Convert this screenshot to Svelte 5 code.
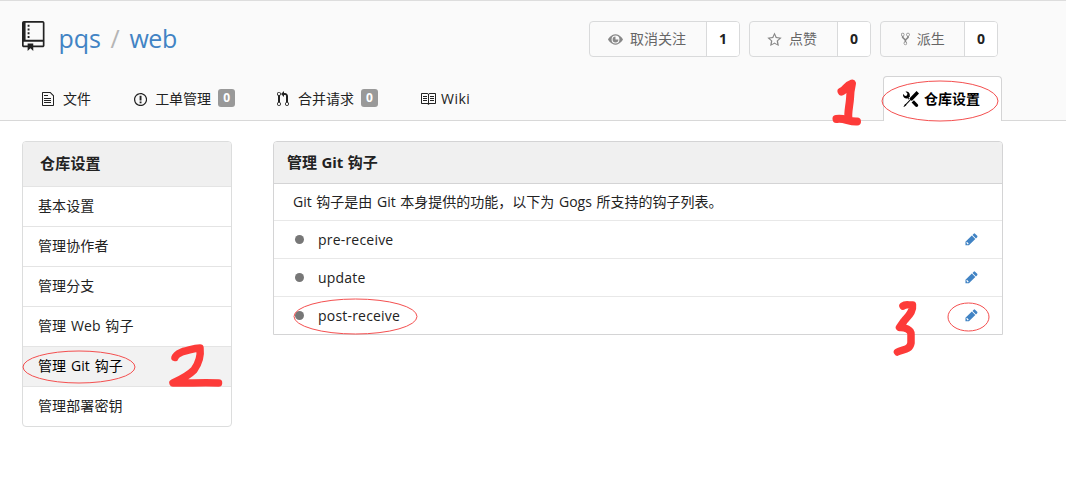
<script>
  const icons = {
    repo: [12, 'M4 9H3V8h1v1zm0-3H3v1h1V6zm0-2H3v1h1V4zm0-2H3v1h1V2zm8-1v12c0 .55-.45 1-1 1H6v2l-1.500-1.500L3 16v-2H1c-.55 0-1-.45-1-1V1c0-.55.45-1 1-1h10c.55 0 1 .45 1 1zm-.9 10H.9v2H3v-1h3v1h5.100v-2zm0-10.100H1.900V10h9.200V.9z'],
    file: [12, 'M6 5H2V4h4v1zM2 8h7V7H2v1zm0 2h7V9H2v1zm0 2h7v-1H2v1zm10-7.5V14c0 .55-.45 1-1 1H1c-.55 0-1-.45-1-1V2c0-.55.45-1 1-1h7.5L12 4.5zM11 5L8 2H1v12h10V5z'],
    issue: [14, 'M7 2.3c3.14 0 5.7 2.56 5.7 5.7s-2.56 5.7-5.7 5.7A5.71 5.71 0 0 1 1.3 8c0-3.14 2.56-5.7 5.7-5.7zM7 1C3.14 1 0 4.14 0 8s3.14 7 7 7 7-3.14 7-7-3.14-7-7-7zm1 3H6v5h2V4zm0 6H6v2h2v-2z'],
    pull: [12, 'M11 11.28V5c-.03-.78-.34-1.47-.94-2.06C9.46 2.35 8.78 2.03 8 2H7V0L4 3l3 3V4h1c.27.02.48.11.69.31.21.2.3.42.31.69v6.28A1.993 1.993 0 0 0 10 15a1.993 1.993 0 0 0 1-3.72zm-1 2.92c-.66 0-1.2-.55-1.2-1.2 0-.65.55-1.2 1.2-1.2.65 0 1.2.55 1.2 1.2 0 .65-.55 1.2-1.2 1.2zM4 3c0-1.11-.89-2-2-2a1.993 1.993 0 0 0-1 3.72v6.56A1.993 1.993 0 0 0 2 15a1.993 1.993 0 0 0 1-3.72V4.72c.59-.34 1-.98 1-1.72zm-.8 10c0 .66-.55 1.2-1.2 1.2-.65 0-1.2-.55-1.2-1.2 0-.65.55-1.2 1.2-1.2.65 0 1.2.55 1.2 1.2zM2 4.2C1.34 4.2.8 3.65.8 3c0-.65.55-1.2 1.2-1.2.65 0 1.2.55 1.2 1.2 0 .65-.55 1.2-1.2 1.2z'],
    book: [16, 'M3 5h4v1H3V5zm0 3h4V7H3v1zm0 2h4V9H3v1zm11-5h-4v1h4V5zm0 2h-4v1h4V7zm0 2h-4v1h4V9zm2-6v9c0 .55-.45 1-1 1H9.5l-1 1-1-1H2c-.55 0-1-.45-1-1V3c0-.55.45-1 1-1h5.5l1 1 1-1H15c.55 0 1 .45 1 1zm-8 .5L7.5 3H2v9h6V3.5zm7-.5H9.5l-.5.5V12h6V3z'],
    eye: [16, 'M8.06 2.500C3 2.500 0 8 0 8s3 5.500 8.060 5.500C13 13.500 16 8 16 8s-3-5.500-7.940-5.500zM8 12.200A4.200 4.200 0 1 1 8 3.800a4.200 4.200 0 0 1 0 8.400zM11.100 8A3.100 3.100 0 1 1 8 4.900L8 8z'],
    star: [16, 'M8 .5l2.250 4.800 5.450.7-3.950 3.700.95 5.300L8 12.600 3.300 15l.95-5.300L.3 6l5.450-.7L8 .5zm0 2.800L6.700 6.500l-3.700.5 2.700 2.400-.6 3.600L8 11.300l2.900 1.700-.6-3.600L13 7l-3.700-.5L8 3.300z'],
    fork: [10, 'M8 1a1.993 1.993 0 0 0-1 3.72V6L5 8 3 6V4.72A1.993 1.993 0 0 0 2 1a1.993 1.993 0 0 0-1 3.72V6.5l3 3v1.78A1.993 1.993 0 0 0 5 15a1.993 1.993 0 0 0 1-3.72V9.5l3-3V4.72A1.993 1.993 0 0 0 8 1zM2 4.2C1.34 4.2.8 3.65.8 3c0-.65.55-1.2 1.2-1.2.65 0 1.2.55 1.2 1.2 0 .65-.55 1.2-1.2 1.2zm3 10c-.66 0-1.2-.55-1.2-1.2 0-.65.55-1.2 1.2-1.2.65 0 1.2.55 1.2 1.2 0 .65-.55 1.2-1.2 1.2zm3-10c-.66 0-1.2-.55-1.2-1.2 0-.65.55-1.2 1.2-1.2.65 0 1.2.55 1.2 1.2 0 .65-.55 1.2-1.2 1.2z'],
    tools: [16, 'M4.48 7.27c.26.26 1.28 1.33 1.28 1.33l.56-.58-.88-.91 1.69-1.8s-.76-.74-.43-.45c.32-1.19.03-2.51-.87-3.44C4.93.5 3.66.2 2.52.51l1.93 2-.51 1.96-1.89.52-1.93-1.99C-.19 4.17.1 5.48 1 6.4c.94.98 2.29 1.26 3.48.87zm6.44 1.94l-2.33 2.3 3.84 3.98c.31.33.73.49 1.14.49.41 0 .82-.16 1.14-.49.63-.65.63-1.7 0-2.35l-3.79-3.93zM16 2.53L13.55 0 6.33 7.46l.88.91-4.31 4.46-.99.53-1.39 2.27.35.37 2.2-1.44.51-1.02L7.9 9.08l.88.91L16 2.53z'],
    pencil: [14, 'M.5 10.500v3.700h3.700l6.800-6.700-3.700-3.700-6.800 6.700zm2.800 2.600H2.200v-1H1.500v-1l.6-.6 1.900 1.900-.7.7zM13 5.500l-1.300 1.300L8 3.100l1.300-1.300a1 1 0 0 1 1.400 0L13 4.100c.4.4.4 1 0 1.400z'],
  };

  const actions = [
    { icon: 'eye', label: '取消关注', count: 1, kind: 'watch' },
    { icon: 'star', label: '点赞', count: 0, kind: 'star' },
    { icon: 'fork', label: '派生', count: 0, kind: 'fork' },
  ];
  const tabs = [
    { icon: 'file', label: '文件', kind: 'files' },
    { icon: 'issue', label: '工单管理', count: 0, kind: 'issues' },
    { icon: 'pull', label: '合并请求', count: 0, kind: 'pulls' },
    { icon: 'book', label: 'Wiki', kind: 'wiki' },
  ];
  const menu = ['基本设置', '管理协作者', '管理分支', '管理 Web 钩子', '管理 Git 钩子', '管理部署密钥'];
  const hooks = ['pre-receive', 'update', 'post-receive'];
</script>

{#snippet icon(name, size)}
  <svg class="icon" width={(icons[name][0] * size) / 16} height={size} viewBox="0 0 {icons[name][0]} 16"><path d={icons[name][1]} /></svg>
{/snippet}

<div class="page">
  <header>
    <div class="top">
      <div class="title">
        {@render icon('repo', 30)}
        <a class="owner" href="#owner">pqs</a><span class="slash">/</span><a class="name" href="#repo">web</a>
      </div>
      <div class="actions">
        {#each actions as a}
          <div class="action {a.kind}">
            <span class="label">{@render icon(a.icon, a.kind === 'fork' ? 14 : 15)}<span>{a.label}</span></span>
            <b>{a.count}</b>
          </div>
        {/each}
      </div>
    </div>
    <nav>
      {#each tabs as t}
        <div class="tab {t.kind}">
          {@render icon(t.icon, t.kind === 'issues' ? 15 : 16)}<span class="text">{t.label}</span>
          {#if t.count !== undefined}<span class="badge">{t.count}</span>{/if}
        </div>
      {/each}
      <div class="active-tab">{@render icon('tools', 16)}<span>仓库设置</span></div>
    </nav>
  </header>

  <main>
    <aside>
      <h4>仓库设置</h4>
      {#each menu as item, i}
        <div class="item" class:current={i === 4}>{item}</div>
      {/each}
    </aside>
    <section>
      <h4>管理 Git 钩子</h4>
      <p class="row intro">Git 钩子是由 Git 本身提供的功能，以下为 Gogs 所支持的钩子列表。</p>
      {#each hooks as hook}
        <div class="row hook">
          <i></i><span class="hook-name">{hook}</span>{@render icon('pencil', 15)}
        </div>
      {/each}
    </section>
  </main>

  <svg class="marks" width="1066" height="477" viewBox="0 0 1066 477" fill="none">
    <g stroke="#f44f4f" stroke-width="1">
      <ellipse cx="940" cy="101" rx="58" ry="20" />
      <ellipse cx="79" cy="367" rx="56" ry="16" />
      <ellipse cx="355.500" cy="316.500" rx="61.500" ry="17.500" />
      <ellipse cx="968.500" cy="317" rx="20.500" ry="14" />
    </g>
    <g stroke="#fd3b39" stroke-width="8" stroke-linecap="round" stroke-linejoin="round">
      <path d="M841.500 91.500C845 90 847 85 852 83.500C851 88 850 94 850 99C849.500 106 847.500 113 848.500 119M836.500 119C844 117.500 849 122 857 121.500" />
      <path stroke-width="7.500" d="M175 357.500C176 354 180 353 183 351.500C190 350 194 348 200 348C201 356 199 363 194 370C189 375 182 379 173 383C188 383.500 202 382 218.500 383" />
      <path stroke-width="7.500" d="M903 306C906 303.500 909 305.500 912.500 305C913.500 312 908 316 904 321L899.500 327.500C905 327 911 330 911 334L911 343C909.500 351 902 349 897.500 352" />
    </g>
  </svg>
</div>

<style>
  .page { position: relative; width: 1066px; height: 477px; overflow: hidden; background: #fff; color: #222; font: 14px/20px "Open Sans", "Noto Sans CJK SC", sans-serif; }
  .icon { display: block; flex: none; fill: currentColor; }
  header { box-sizing: border-box; height: 121px; background: #fafafa; border-top: 1px solid #ddd; box-shadow: inset 0 -1px #d8d8d8; display: flex; flex-direction: column; }
  .top { height: 75px; display: flex; justify-content: space-between; padding: 0 68px 0 22px; box-sizing: border-box; }
  .title { display: flex; align-items: flex-start; padding-top: 20px; font-size: 25px; line-height: 34px; }
  .title a { color: #4183c4; text-decoration: none; }
  .owner { width: 52px; margin-left: 14px; }
  .slash { width: 19px; color: #b5b5b5; }
  .name { letter-spacing: -.5px; }
  .actions { display: flex; gap: 9px; padding-top: 20px; }
  .action { display: flex; box-sizing: border-box; height: 36px; border: 1px solid #d9dadb; border-radius: 4px; background: #fafafa; overflow: hidden; }
  .watch { width: 151px; }
  .star { width: 122px; }
  .fork { width: 118px; }
  .label { flex: 1; display: flex; align-items: center; gap: 7px; padding-left: 18px; color: #666; }
  .label .icon { color: #888; }
  .star .label { padding-left: 17px; }
  .fork .label { padding-left: 20px; }
  .action b { width: 32px; border-left: 1px solid #d9dadb; background: #fff; text-align: center; line-height: 34px; }
  nav { flex: 1; display: flex; padding: 0 64px 0 42px; }
  .tab { display: flex; align-items: center; padding-top: 1px; }
  .text { margin-left: 9px; }
  .files { width: 92px; }
  .issues { width: 143px; }
  .issues .text { margin-left: 8px; }
  .pulls { width: 143px; }
  .pulls .text { margin-left: 9px; }
  .wiki .text { margin-left: 5px; letter-spacing: .5px; }
  .badge { width: 17px; height: 18px; margin: 0 0 2px 7px; border-radius: 3px; background: #999; color: #fff; font-size: 12px; line-height: 18px; font-weight: 700; text-align: center; }
  .active-tab { box-sizing: border-box; width: 119px; height: 45px; margin-left: auto; border: 1px solid #d4d4d5; border-bottom: 0; border-radius: 4px 4px 0 0; background: #fff; display: flex; align-items: center; gap: 5px; padding-left: 19px; color: #000; font-weight: 700; }
  main { display: flex; align-items: flex-start; gap: 41px; padding: 20px 63px 0 22px; }
  h4 { margin: 0; box-sizing: border-box; font-size: 15px; font-weight: 700; background: #f0f0f0; }
  aside { box-sizing: border-box; width: 210px; border: 1px solid #dcdddd; border-radius: 4px; overflow: hidden; }
  aside h4 { height: 44px; line-height: 42px; padding-left: 17px; letter-spacing: .2px; }
  .item { box-sizing: border-box; height: 40px; border-top: 1px solid #e4e4e4; padding-left: 15px; line-height: 38px; letter-spacing: .1px; word-spacing: 1px; }
  .current { background: #f2f2f2; color: #000; }
  section { box-sizing: border-box; flex: 1; border: 1px solid #d4d4d5; border-radius: 4px 4px 0 0; overflow: hidden; }
  section h4 { height: 42px; border-bottom: 1px solid #d4d4d5; padding-left: 13px; line-height: 40px; word-spacing: .5px; }
  .row { box-sizing: border-box; height: 38px; margin: 0; border-top: 1px solid #e8e8e8; }
  .intro { height: 36px; border-top: 0; padding-left: 19px; line-height: 36px; word-spacing: 1px; }
  .hook { display: flex; align-items: center; padding: 0 24px 0 21px; }
  .hook i { width: 9px; height: 9px; border-radius: 50%; background: #777; }
  .hook-name { flex: 1; margin-left: 14px; letter-spacing: .2px; }
  .hook .icon { color: #4183c4; }
  .marks { position: absolute; left: 0; top: 0; pointer-events: none; }
</style>
